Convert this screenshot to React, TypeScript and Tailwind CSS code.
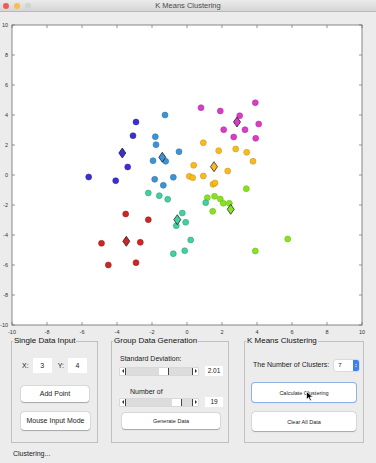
import React from "react";

type Pt = [number, number];

const CLUSTERS: { fill: string; edge: string; pts: Pt[]; c: Pt }[] = [
  {
    fill: "#3b2fd4",
    edge: "#2a209c",
    pts: [[136, 122], [133, 135.7], [127.7, 167], [115.7, 180.7], [88.7, 177]],
    c: [122.3, 153],
  },
  {
    fill: "#3d93d3",
    edge: "#2b6fa3",
    pts: [
      [165, 115], [155.3, 136.7], [156, 144.7], [179, 151.7], [153, 160.7],
      [165.7, 161.3], [154.7, 179.3], [173.3, 177.3], [163.3, 185.3],
    ],
    c: [162.3, 157.3],
  },
  {
    fill: "#d93cc6",
    edge: "#a52a96",
    pts: [
      [201, 107.7], [220.3, 111], [239.7, 115.7], [255.3, 102.7], [258.7, 124],
      [223.7, 129.7], [245, 129.7], [233.7, 137], [255.7, 138.3],
    ],
    c: [237, 122],
  },
  {
    fill: "#f7bb22",
    edge: "#c48d10",
    pts: [
      [203.3, 142.7], [218.7, 150.7], [235.7, 149], [246.7, 152.3], [253, 161.3],
      [193.7, 165.3], [227.7, 171], [189.3, 176.3], [192.7, 177.7], [203.3, 176],
      [213, 184.3], [215, 183],
    ],
    c: [214, 166.7],
  },
  {
    fill: "#88e21f",
    edge: "#65b010",
    pts: [
      [246.3, 188.7], [207.3, 197.7], [214.5, 196.3], [220.3, 199], [223.3, 203.3],
      [229.3, 203.3], [212.7, 211.3], [255.3, 251], [287.7, 239],
    ],
    c: [230.7, 209.3],
  },
  {
    fill: "#44cf9f",
    edge: "#2a9a74",
    pts: [
      [148.3, 193], [159.3, 195.7], [167.7, 199.3], [205.7, 202.7], [182.3, 213],
      [185.7, 222.3], [176.3, 225.7], [190.7, 240], [184.7, 250.7], [173.3, 253.7],
    ],
    c: [177.3, 219.7],
  },
  {
    fill: "#cc2626",
    edge: "#951818",
    pts: [[125.7, 214], [148.3, 219.7], [140.3, 242.3], [101.5, 243.3], [108.3, 265], [136, 262.7]],
    c: [126.3, 241.3],
  },
];

const XT = [-10, -8, -6, -4, -2, 0, 2, 4, 6, 8, 10];

function Plot() {
  return (
    <svg viewBox="0 12 376 325" width={376} height={325} className="block">
      <rect x={12} y={25} width={350} height={300} fill="#fff" stroke="#6b6b6b" strokeWidth={0.8} />
      {XT.map((v, i) => {
        const x = 12 + i * 35;
        const y = 25 + i * 30;
        return (
          <g key={v} stroke="#6b6b6b" strokeWidth={0.7}>
            <line x1={x} y1={25} x2={x} y2={28} />
            <line x1={x} y1={325} x2={x} y2={322} />
            <line x1={12} y1={y} x2={15} y2={y} />
            <line x1={362} y1={y} x2={359} y2={y} />
          </g>
        );
      })}
      <g fontSize={5.5} fill="#333" fontFamily="'Liberation Sans', Arial, sans-serif">
        {XT.map((v, i) => (
          <text key={"x" + v} x={12 + i * 35} y={334} textAnchor="middle">
            {v}
          </text>
        ))}
        {XT.map((v, i) => (
          <text key={"y" + v} x={8} y={325 - i * 30 + 2} textAnchor="end">
            {v}
          </text>
        ))}
      </g>
      {CLUSTERS.map((cl, k) => (
        <g key={k}>
          {cl.pts.map(([x, y], j) => (
            <circle key={j} cx={x} cy={y} r={3} fill={cl.fill} stroke={cl.edge} strokeWidth={0.5} />
          ))}
        </g>
      ))}
      {CLUSTERS.map((cl, k) => {
        const [x, y] = cl.c;
        return (
          <path
            key={"c" + k}
            d={`M${x} ${y - 5}L${x + 3.5} ${y}L${x} ${y + 5}L${x - 3.5} ${y}Z`}
            fill={cl.fill}
            stroke="#111"
            strokeWidth={0.7}
          />
        );
      })}
    </svg>
  );
}

function Slider({ thumb }: { thumb: number }) {
  return (
    <div className="flex h-[7px] w-[78px] items-stretch bg-white shadow-[0_0_0_0.5px_#c4c4c4]">
      <span className="flex w-[6px] items-center justify-center border-r border-[#444]">
        <span className="h-0 w-0 border-y-[2px] border-r-[2px] border-y-transparent border-r-[#333]" />
      </span>
      <span className="relative flex-1 bg-[#dcdcdc]">
        <span
          className="absolute top-0 h-full w-[10px] border-r border-[#444] bg-white"
          style={{ left: thumb }}
        />
      </span>
      <span className="flex w-[6px] items-center justify-center border-l border-[#444]">
        <span className="h-0 w-0 border-y-[2px] border-l-[2px] border-y-transparent border-l-[#333]" />
      </span>
    </div>
  );
}

function Btn({ children, className }: { children: React.ReactNode; className: string }) {
  return (
    <button
      className={
        "flex items-center justify-center rounded-[3px] bg-white text-[#222] shadow-[0_0.5px_1px_rgba(0,0,0,0.25),0_0_0_0.5px_#cfcfcf] " +
        className
      }
    >
      {children}
    </button>
  );
}

function Panel({ title, className, children }: { title: string; className: string; children: React.ReactNode }) {
  return (
    <fieldset className={"h-[106px] border border-[#c0c0c0] " + className}>
      <legend className="ml-[1px] px-[1px] text-[8px] leading-[8px] text-[#111]">{title}</legend>
      {children}
    </fieldset>
  );
}

export default function App() {
  return (
    <div className="relative h-[463px] w-[376px] overflow-hidden bg-[#ececec] font-['Liberation_Sans',Arial,sans-serif]">
      {/* title bar */}
      <div className="relative flex h-[12px] items-center justify-center border-b border-[#b9b9b9] bg-gradient-to-b from-[#ebebeb] to-[#d5d5d5]">
        <div className="absolute left-[3px] top-[2.5px] flex gap-[5px]">
          <span className="h-[6px] w-[6px] rounded-full bg-[#ee5c55]" />
          <span className="h-[6px] w-[6px] rounded-full bg-[#f5be4f]" />
          <span className="h-[6px] w-[6px] rounded-full bg-[#d3d3d3]" />
        </div>
        <span className="text-[7.5px] leading-[8px] text-[#4a4a4a]">K Means Clustering</span>
      </div>

      <Plot />

      <div className="flex items-start pl-[11px]">
        <Panel title="Single Data Input" className="w-[87px]">
          <div className="flex flex-col pt-[13px] text-[7px] leading-[8px] text-[#222]">
            <div className="flex items-center pl-[10px]">
              <span>X:</span>
              <span className="ml-[4px] flex h-[15px] w-[19px] items-center justify-center bg-white">3</span>
              <span className="ml-[6px]">Y:</span>
              <span className="ml-[4px] flex h-[15px] w-[19px] items-center justify-center bg-white">4</span>
            </div>
            <Btn className="ml-[9px] mt-[13px] h-[16px] w-[68px] text-[7px]">Add Point</Btn>
            <Btn className="ml-[9px] mt-[10px] h-[18px] w-[69px] text-[7px]">Mouse Input Mode</Btn>
          </div>
        </Panel>

        <Panel title="Group Data Generation" className="ml-[13px] w-[118px]">
          <div className="flex flex-col pt-[10px] text-[7px] leading-[8px] text-[#222]">
            <span className="ml-[8px]">Standard Deviation:</span>
            <div className="ml-[8px] mt-[3px] flex items-center">
              <Slider thumb={33} />
              <span className="ml-[7px] flex h-[10px] w-[18px] items-center justify-center bg-white text-[6.5px]">2.01</span>
            </div>
            <span className="ml-[18px] mt-[12px]">Number of</span>
            <div className="ml-[8px] mt-[1px] flex items-center">
              <Slider thumb={46} />
              <span className="ml-[7px] flex h-[10px] w-[18px] items-center justify-center bg-white text-[6.5px]">19</span>
            </div>
            <Btn className="ml-[10px] mt-[6px] h-[16px] w-[98px] text-[5.5px]">Generate Data</Btn>
          </div>
        </Panel>

        <Panel title="K Means Clustering" className="ml-[15px] w-[120px]">
          <div className="flex flex-col pt-[14px] text-[7px] leading-[8px] text-[#222]">
            <div className="ml-[8px] flex h-[12px] items-center">
              <span>The Number of Clusters:</span>
              <span className="ml-[5px] flex h-[11px] w-[25px] items-center rounded-[2px] bg-white shadow-[0_0_0_0.5px_#c8c8c8]">
                <span className="flex-1 pl-[4px] text-[6px]">7</span>
                <span className="flex h-full w-[6px] flex-col items-center justify-center gap-[1px] rounded-r-[2px] bg-[#3b82f0]">
                  <span className="h-0 w-0 border-x-[1.5px] border-b-[1.5px] border-x-transparent border-b-white" />
                  <span className="h-0 w-0 border-x-[1.5px] border-t-[1.5px] border-x-transparent border-t-white" />
                </span>
              </span>
            </div>
            <Btn className="ml-[7px] mt-[12px] h-[19px] w-[104px] text-[5.5px] ring-1 ring-[#8fb2e6]">Calculate Clustering</Btn>
            <Btn className="ml-[7px] mt-[10px] h-[19px] w-[104px] text-[5.5px]">Clear All Data</Btn>
          </div>
        </Panel>
      </div>

      <p className="mt-[7px] pl-[13px] text-[7px] leading-[8px] text-[#222]">Clustering...</p>

      {/* mouse pointer */}
      <svg className="absolute left-[306px] top-[391px]" width="8" height="11" viewBox="0 0 8 11">
        <path d="M0.5 0.5L0.5 8.5L2.6 6.6L4 9.8L5.4 9.2L4 6.1L6.8 6.1Z" fill="#000" stroke="#fff" strokeWidth={0.7} />
      </svg>
    </div>
  );
}
